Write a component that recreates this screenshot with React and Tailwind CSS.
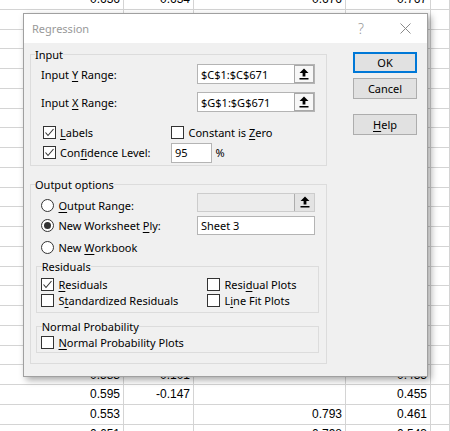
import React from "react";

const sheetRows = Array.from({ length: 24 }, () => ["", "", "", "", ""]);
sheetRows[0] = ["0.636", "0.634", "0.676", "0.767", ""];
sheetRows[19] = ["0.583", "-0.101", "", "0.433", ""];
sheetRows[20] = ["0.595", "-0.147", "", "0.455", ""];
sheetRows[21] = ["0.553", "", "0.793", "0.461", ""];
sheetRows[22] = ["0.651", "", "0.798", "0.543", ""];

const colWidths = ["w-[124px]", "w-[70px]", "w-[152px]", "w-[85px]", "flex-1"];

const Key = ({ children }) => (
  <span className="underline underline-offset-[2px]">{children}</span>
);

const Checkbox = ({ checked }) => (
  <div className="w-[13px] h-[13px] shrink-0 border border-[#333333] bg-white flex items-center justify-center">
    {checked && (
      <svg width="11" height="11" viewBox="0 0 11 11">
        <polyline points="1.5,5.5 4,8.5 9.5,2" fill="none" stroke="#333333" strokeWidth="1.1" />
      </svg>
    )}
  </div>
);

const Radio = ({ checked }) => (
  <div className="w-[13px] h-[13px] shrink-0 rounded-full border border-[#333333] bg-white flex items-center justify-center">
    {checked && <div className="w-[7px] h-[7px] rounded-full bg-[#333333]"></div>}
  </div>
);

const UpIcon = () => (
  <svg width="10" height="12" viewBox="0 0 10 12">
    <path d="M5 0.5 L0.5 5 L3.6 5 L3.6 8.6 L6.4 8.6 L6.4 5 L9.5 5 Z" fill="#000" />
    <rect x="0.5" y="10" width="9" height="1.5" fill="#000" />
  </svg>
);

const RefField = ({ value, disabled }) => (
  <div
    className={
      disabled
        ? "flex w-[118px] h-[19px] border border-[#cccccc] bg-[#ececec]"
        : "flex w-[118px] h-[20px] border border-[#b4b4b4] bg-white"
    }
  >
    <div className="flex-1 pl-[3px] flex items-center">{value}</div>
    <div
      className={
        disabled
          ? "w-[20px] h-full border-l border-[#adadad] bg-[#e3e3e3] flex items-center justify-center"
          : "w-[20px] h-full border border-[#a8a8a8] bg-[#f7f7f7] flex items-center justify-center"
      }
    >
      <UpIcon />
    </div>
  </div>
);

const Button = ({ children, primary, className = "" }) => (
  <div
    className={
      (primary ? "border-2 border-[#0078d7] " : "border border-[#adadad] ") +
      "w-[64px] h-[21px] bg-[#e1e1e1] flex items-center justify-center " +
      className
    }
  >
    {children}
  </div>
);

export default function App() {
  return (
    <div className="relative w-[450px] h-[431px] overflow-hidden bg-white">
      {/* spreadsheet behind */}
      <div className="-mt-[10px] font-['Liberation_Sans',Arial,sans-serif] text-[12px] text-black">
        {sheetRows.map((row, i) => (
          <div key={i} className="flex h-[19.75px] border-b border-[#d4d4d4]">
            {row.map((cell, j) => (
              <div
                key={j}
                className={colWidths[j] + " border-r border-[#d4d4d4] text-right pr-[3px] flex items-center justify-end"}
              >
                {cell}
              </div>
            ))}
          </div>
        ))}
      </div>

      {/* dialog */}
      <div className="absolute left-[23px] top-[13px] w-[405px] h-[364px] bg-[#f0f0f0] border border-[#a0a0a0] shadow-[3px_3px_7px_rgba(0,0,0,0.35)] font-['Noto_Sans',sans-serif] text-[11px] leading-[15px] text-black">
        <div className="h-[29px] bg-white flex items-center pl-[8px] pr-[16px]">
          <div className="flex-1 text-[#999999]">Regression</div>
          <div className="text-[14px] text-[#999999] font-light">?</div>
          <svg className="ml-[36px]" width="11" height="11" viewBox="0 0 11 11">
            <path d="M0.5 0.5 L10.5 10.5 M10.5 0.5 L0.5 10.5" stroke="#8a8a8a" strokeWidth="1" />
          </svg>
        </div>

        <div className="flex pl-[6px] pt-[3.5px]">
          <div className="w-[297px]">
            {/* Input */}
            <fieldset className="border border-[#dcdcdc] h-[119.5px]">
              <legend className="ml-[4px]">Input</legend>
              <div className="pl-[10px]">
                <div className="flex items-center h-[20px] mt-[2.5px]">
                  <div className="w-[156px]">
                    Input <Key>Y</Key> Range:
                  </div>
                  <RefField value="$C$1:$C$671" />
                </div>
                <div className="flex items-center h-[20px] mt-[8px]">
                  <div className="w-[156px]">
                    Input <Key>X</Key> Range:
                  </div>
                  <RefField value="$G$1:$G$671" />
                </div>
                <div className="flex items-center h-[20px] mt-[10.5px]">
                  <div className="w-[130px] flex items-center pl-[2px]">
                    <Checkbox checked />
                    <span className="ml-[4px]">
                      <Key>L</Key>abels
                    </span>
                  </div>
                  <Checkbox />
                  <span className="ml-[4.5px]">
                    Constant is <Key>Z</Key>ero
                  </span>
                </div>
                <div className="flex items-center h-[20px]">
                  <div className="w-[130px] flex items-center pl-[2px]">
                    <Checkbox checked />
                    <span className="ml-[4px]">
                      Con<Key>f</Key>idence Level:
                    </span>
                  </div>
                  <div className="w-[41px] h-[20px] border border-[#b4b4b4] bg-white pl-[3px] flex items-center">95</div>
                  <span className="ml-[3.5px]">%</span>
                </div>
              </div>
            </fieldset>

            {/* Output options */}
            <fieldset className="border border-[#dcdcdc] h-[187.5px] mt-[10.5px]">
              <legend className="ml-[4px]">Output options</legend>
              <div className="pl-[10px]">
                <div className="flex items-start h-[19px] mt-[1px]">
                  <div className="w-[156px] h-[20px] mt-[3px] flex items-center shrink-0">
                    <Radio />
                    <span className="ml-[4.5px]">
                      <Key>O</Key>utput Range:
                    </span>
                  </div>
                  <RefField disabled value="" />
                </div>
                <div className="flex items-center h-[20px] mt-[4px]">
                  <div className="w-[156px] flex items-center">
                    <Radio checked />
                    <span className="ml-[4.5px]">
                      New Worksheet <Key>P</Key>ly:
                    </span>
                  </div>
                  <div className="w-[118px] h-[19px] border border-[#b4b4b4] bg-white pl-[3px] flex items-center">Sheet 3</div>
                </div>
                <div className="flex items-center h-[20px] mt-[1.5px]">
                  <Radio />
                  <span className="ml-[4.5px]">
                    New <Key>W</Key>orkbook
                  </span>
                </div>
              </div>

              <fieldset className="border border-[#dcdcdc] h-[54px] w-[283px] ml-[4.7px] mt-[2px]">
                <legend className="ml-[5px]">Residuals</legend>
                <div className="pl-[4.3px] mt-[2px]">
                  <div className="flex items-center h-[16px]">
                    <div className="w-[166px] flex items-center">
                      <Checkbox checked />
                      <span className="ml-[4.5px]">
                        <Key>R</Key>esiduals
                      </span>
                    </div>
                    <Checkbox />
                    <span className="ml-[4.5px]">
                      Resi<Key>d</Key>ual Plots
                    </span>
                  </div>
                  <div className="flex items-center h-[16px]">
                    <div className="w-[166px] flex items-center">
                      <Checkbox />
                      <span className="ml-[4.5px]">
                        S<Key>t</Key>andardized Residuals
                      </span>
                    </div>
                    <Checkbox />
                    <span className="ml-[4.5px]">
                      L<Key>i</Key>ne Fit Plots
                    </span>
                  </div>
                </div>
              </fieldset>

              <fieldset className="border border-[#dcdcdc] h-[34px] w-[283px] ml-[4.7px] mt-[6px]">
                <legend className="ml-[5px]">Normal Probability</legend>
                <div className="pl-[4.3px]">
                  <div className="flex items-center h-[16px]">
                    <Checkbox />
                    <span className="ml-[4.5px]">
                      <Key>N</Key>ormal Probability Plots
                    </span>
                  </div>
                </div>
              </fieldset>
            </fieldset>
          </div>

          <div className="ml-[26px] pt-[5.5px]">
            <Button primary>OK</Button>
            <Button className="mt-[5px]">Cancel</Button>
            <Button className="mt-[15px]">
              <span>
                <Key>H</Key>elp
              </span>
            </Button>
          </div>
        </div>
      </div>
    </div>
  );
}
